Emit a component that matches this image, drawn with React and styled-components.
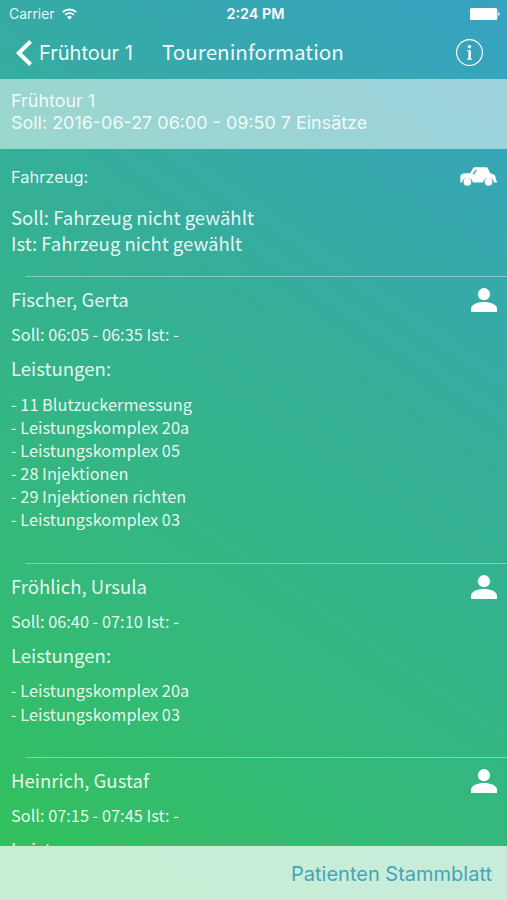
import React from "react";
import styled, { createGlobalStyle } from "styled-components";

const Global = createGlobalStyle`
  * { box-sizing: border-box; }
  body { margin: 0; }
`;

const sans = `"Inter", "Liberation Sans", sans-serif`;
const humanist = `"Noto Sans CJK SC", "Noto Sans", sans-serif`;

const Screen = styled.div`
  display: flex;
  flex-direction: column;
  width: 507px;
  height: 900px;
  overflow: hidden;
  color: rgba(255, 255, 255, 0.9);
  font-family: ${humanist};
  background: linear-gradient(
    214.6deg,
    #37a2c2 0%,
    #36aaa8 26%,
    #35af97 40%,
    #34b488 55%,
    #34b97a 71%,
    #33be67 87%,
    #32c157 100%
  );
`;

const StatusBar = styled.div`
  flex: none;
  display: grid;
  grid-template-columns: 1fr auto 1fr;
  align-items: center;
  height: 28px;
  padding: 0 7px 0 9px;
  font-family: ${sans};
  line-height: 28px;
`;

const Carrier = styled.div`
  display: flex;
  align-items: center;
  gap: 7px;
  font-size: 13.9px;
`;

const Clock = styled.div`
  padding-left: 2px;
  color: #fff;
  font-size: 14.4px;
  font-weight: 600;
`;

const BatteryIcon = styled.svg`
  justify-self: end;
  display: block;
`;

const NavBar = styled.header`
  flex: none;
  display: flex;
  align-items: center;
  height: 51px;
  padding: 0 23px 2px 15px;
`;

const BackButton = styled.div`
  display: flex;
  align-items: center;
  gap: 6px;
  width: 147px;
  color: rgba(255, 255, 255, 0.95);
  font: 400 20px/26px ${sans};
  white-space: nowrap;

  svg { flex: none; }
`;

const Title = styled.h1`
  flex: 1;
  margin: 0;
  padding-bottom: 4px;
  color: rgba(255, 255, 255, 0.95);
  font-size: 20.65px;
  font-weight: 400;
  line-height: 26px;
`;

const TourSummary = styled.div`
  flex: none;
  height: 70px;
  padding: 11px 11px 0;
  color: rgba(255, 255, 255, 0.9);
  background: rgba(255, 255, 255, 0.5);
  font: 400 17.95px/21.5px ${sans};
`;

const Content = styled.main`
  flex: 1;
  min-height: 0;
  overflow: hidden;
`;

const Vehicle = styled.section`
  display: flex;
  justify-content: space-between;
  height: 127px;
  padding: 17px 10px 0 11px;
`;

const VehicleLabel = styled.div`
  padding-top: 1px;
  margin-bottom: 17px;
  font: 400 16.4px/20px ${sans};
`;

const Line = styled.div`
  font-size: 18.57px;
  line-height: 26px;
`;

const Visit = styled.section`
  &::before {
    content: "";
    display: block;
    height: 1px;
    margin-left: 26px;
    background: rgba(255, 255, 255, 0.38);
  }
`;

const VisitBody = styled.div`
  display: flex;
  justify-content: space-between;
  padding: 9px 10px 31.5px 11px;
`;

const Time = styled.div`
  margin: 11px 0 9px;
  font-size: 16.35px;
  line-height: 23px;
`;

const Services = styled.ul`
  margin: 11.7px 0 0;
  padding: 0;
  list-style: none;
  font-size: 16.33px;
  line-height: 23.1px;
`;

const PersonSvg = styled.svg`
  flex: none;
  margin-top: 2px;
`;

const CarSvg = styled.svg`
  flex: none;
  margin-top: 1px;
`;

const BottomBar = styled.footer`
  flex: none;
  display: flex;
  align-items: center;
  justify-content: flex-end;
  height: 54px;
  padding: 1px 15px 0 0;
  color: #43a5b7;
  background: rgba(255, 255, 255, 0.73);
  font: 400 20px/26px ${sans};
`;

const PersonIcon = () => (
  <PersonSvg width="26" height="25" viewBox="0 0 26 25" fill="#fff">
    <circle cx="13" cy="6.2" r="6.1" />
    <path d="M0 24v-3.3C0 16.500 6.500 14 13 14s13 2.500 13 6.700v3.300z" />
  </PersonSvg>
);

const CarIcon = () => (
  <CarSvg width="37" height="20" viewBox="0 0 37 20">
    <path
      fill="#fff"
      d="M.4 14.500V9.200C.4 7.500 2 6.600 4 6.400L10.300 6 13.200.900Q13.600.200 14.600.200H26.200Q27.400.200 27.900 1.200L30.200 6.200 33.400 7.300Q35.200 8 35.500 9.800L36.100 13.300 36.800 14v1.500H33.900A5.500 5.500 0 0 0 23.100 15.500H12.800A5.500 5.500 0 0 0 2 15.500H.4z"
    />
    <path d="M12.400 7.200l3.200-4.500h1.500l-2.700 4.500z" fill="#37a8b1" />
    <circle cx="7.400" cy="14.900" r="3.800" fill="#fff" />
    <circle cx="28.500" cy="14.900" r="3.800" fill="#fff" />
  </CarSvg>
);

const visits = [
  {
    name: "Fischer, Gerta",
    time: "Soll: 06:05 - 06:35 Ist: -",
    services: [
      "11 Blutzuckermessung",
      "Leistungskomplex 20a",
      "Leistungskomplex 05",
      "28 Injektionen",
      "29 Injektionen richten",
      "Leistungskomplex 03",
    ],
  },
  {
    name: "Fröhlich, Ursula",
    time: "Soll: 06:40 - 07:10 Ist: -",
    services: ["Leistungskomplex 20a", "Leistungskomplex 03"],
  },
  { name: "Heinrich, Gustaf", time: "Soll: 07:15 - 07:45 Ist: -", services: [] },
];

export default function App() {
  return (
    <>
      <Global />
      <Screen>
        <StatusBar>
          <Carrier>
            Carrier
            <svg width="15" height="12" viewBox="0 0 15 12" fill="none" stroke="#fff" strokeWidth="1.900">
              <path d="M.8 4.200a9.500 9.500 0 0 1 13.400 0" />
              <path d="M3.200 6.900a6.100 6.100 0 0 1 8.600 0" />
              <path d="M7.500 11.500L5 8.900a3.600 3.600 0 0 1 5 0z" fill="#fff" stroke="none" />
            </svg>
          </Carrier>
          <Clock>2:24 PM</Clock>
          <BatteryIcon width="30" height="12" viewBox="0 0 30 12" fill="#fff">
            <rect x="0" y="0" width="27.300" height="12" rx="1.600" />
            <path d="M28.200 4q1.500.4 1.500 2t-1.500 2z" />
          </BatteryIcon>
        </StatusBar>
        <NavBar>
          <BackButton>
            <svg width="18" height="26" viewBox="0 0 18 26" fill="none" stroke="#fff" strokeWidth="4">
              <path d="M15.600 1.500L3.800 13l11.800 11.500" />
            </svg>
            Frühtour 1
          </BackButton>
          <Title>Toureninformation</Title>
          <svg width="28" height="28" viewBox="0 0 28 28" fill="none" stroke="#fff">
            <circle cx="13.500" cy="13.500" r="12.900" strokeWidth="1.200" />
            <circle cx="13.500" cy="7.800" r="1.700" fill="#fff" stroke="none" />
            <path
              d="M11 11.300h3.900v8.300l1.300.4v.7H11V20l1.400-.4v-7.200l-1.400-.4z"
              fill="#fff"
              stroke="none"
            />
          </svg>
        </NavBar>
        <TourSummary>
          <div>Frühtour 1</div>
          <div>Soll: 2016-06-27 06:00 - 09:50 7 Einsätze</div>
        </TourSummary>
        <Content>
          <Vehicle>
            <div>
              <VehicleLabel>Fahrzeug:</VehicleLabel>
              <Line>Soll: Fahrzeug nicht gewählt</Line>
              <Line>Ist: Fahrzeug nicht gewählt</Line>
            </div>
            <CarIcon />
          </Vehicle>
          {visits.map((visit) => (
            <Visit key={visit.name}>
              <VisitBody>
                <div>
                  <Line>{visit.name}</Line>
                  <Time>{visit.time}</Time>
                  <Line>Leistungen:</Line>
                  <Services>
                    {visit.services.map((service) => (
                      <li key={service}>- {service}</li>
                    ))}
                  </Services>
                </div>
                <PersonIcon />
              </VisitBody>
            </Visit>
          ))}
        </Content>
        <BottomBar>Patienten Stammblatt</BottomBar>
      </Screen>
    </>
  );
}
